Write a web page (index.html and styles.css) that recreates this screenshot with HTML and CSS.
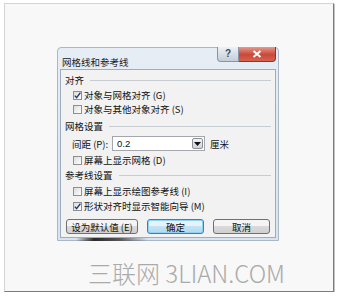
FILE: index.html
```html
<!DOCTYPE html>
<html lang="zh-CN">
<head>
    <meta charset="UTF-8">
    <title>网格线和参考线</title>
    <link rel="stylesheet" href="styles.css">
</head>
<body>
    <div class="photo">
        <div class="dialog">
            <div class="titlebar">
                <span class="title">网格线和参考线</span>
                <div class="caption-buttons">
                    <div class="cap-help">?</div>
                    <div class="cap-close">
                        <svg width="10" height="8" viewBox="0 0 10 8"><path d="M1.5 1 L8.5 7 M8.5 1 L1.5 7" stroke="#fff" stroke-width="2"/></svg>
                    </div>
                </div>
            </div>
            <div class="client">
                <div class="group-head gh-1"><span>对齐</span><i></i></div>
                <div class="check-row r-1">
                    <span class="box checked"><svg width="9" height="9" viewBox="0 0 9 9"><path d="M1.8 4.6 L3.6 6.6 L7.4 1.6" fill="none" stroke="#1c3a6b" stroke-width="1.4"/></svg></span>
                    <span>对象与网格对齐 (<u>G</u>)</span>
                </div>
                <div class="check-row r-2">
                    <span class="box"></span>
                    <span>对象与其他对象对齐 (<u>S</u>)</span>
                </div>

                <div class="group-head gh-2"><span>网格设置</span><i></i></div>
                <div class="spacing-row">
                    <span class="spacing-label">间距 (<u>P</u>):</span>
                    <div class="combo">
                        <span class="combo-value">0.2</span>
                        <span class="combo-arrow"><svg width="7" height="4" viewBox="0 0 7 4"><path d="M0 0 H7 L3.5 4 Z" fill="#111"/></svg></span>
                    </div>
                    <span class="unit">厘米</span>
                </div>
                <div class="check-row r-3">
                    <span class="box"></span>
                    <span>屏幕上显示网格 (<u>D</u>)</span>
                </div>

                <div class="group-head gh-3"><span>参考线设置</span><i></i></div>
                <div class="check-row r-4">
                    <span class="box"></span>
                    <span>屏幕上显示绘图参考线 (<u>I</u>)</span>
                </div>
                <div class="check-row r-5">
                    <span class="box checked"><svg width="9" height="9" viewBox="0 0 9 9"><path d="M1.8 4.6 L3.6 6.6 L7.4 1.6" fill="none" stroke="#1c3a6b" stroke-width="1.4"/></svg></span>
                    <span>形状对齐时显示智能向导 (<u>M</u>)</span>
                </div>

                <div class="button-row">
                    <button class="btn btn-default">设为默认值 (<u>E</u>)</button>
                    <button class="btn btn-ok">确定</button>
                    <button class="btn btn-cancel">取消</button>
                </div>
            </div>
            <div class="bottom-frame"><i></i></div>
        </div>
        <div class="watermark">三联网 3LIAN.COM</div>
    </div>
</body>
</html>
```

FILE: styles.css
```css
* {
    margin: 0;
    padding: 0;
    box-sizing: border-box;
}

body {
    background-color: #ffffff;
    font-family: "Noto Sans CJK SC", "Liberation Sans", sans-serif;
    padding: 3px 0 0 4px;
}

.photo {
    width: 330px;
    height: 289px;
    background-color: #f8f8f8;
    border: 1px solid #d4d4d4;
    border-right-color: #7c7c7c;
    border-bottom-color: #7c7c7c;
    box-shadow: 1px 1px 0 #c4c4c4;
    padding: 43px 0 0 52px;
}

/* dialog window */
.dialog {
    width: 222px;
    height: 194px;
    background: linear-gradient(#e6edf5, #d9e4f0);
    border: 1px solid #aab7c6;
    border-radius: 4px 4px 0 0;
    padding: 0 2px;
    display: flex;
    flex-direction: column;
}

.titlebar {
    height: 21px;
    display: flex;
    justify-content: space-between;
    align-items: flex-start;
}

.title {
    font-size: 9.5px;
    line-height: 11px;
    color: #1a1a1a;
    margin: 9px 0 0 2px;
}

.caption-buttons {
    display: flex;
    margin-top: -1px;
}

.cap-help {
    width: 22px;
    height: 15px;
    border: 1px solid #8894a4;
    border-top: none;
    border-radius: 0 0 0 4px;
    background: linear-gradient(#eef1f5, #c4ccd6);
    font-family: "Liberation Sans", sans-serif;
    font-size: 10px;
    font-weight: bold;
    color: #3d4a5c;
    text-align: center;
    line-height: 14px;
}

.cap-close {
    width: 37px;
    height: 15px;
    border: 1px solid #7b3a32;
    border-top: none;
    border-left: none;
    border-radius: 0 0 4px 0;
    background: linear-gradient(#e49a8d, #c9483a 55%, #d8634f);
    display: flex;
    align-items: center;
    justify-content: center;
}

.client {
    height: 169px;
    background-color: #f2f2f2;
    border: 1px solid #9eacbd;
    padding: 3px 0 0 0;
    display: flex;
    flex-direction: column;
    font-size: 9.5px;
    color: #111;
}

.client u {
    text-decoration: none;
}

.group-head {
    height: 14px;
    line-height: 14px;
    display: flex;
    align-items: center;
    padding: 0 4px 0 4px;
}

.group-head i {
    flex: 1;
    height: 1px;
    background-color: #c7ccd2;
    margin-left: 6px;
}

.gh-2 { margin-top: 3px; }
.gh-3 { margin-top: 1px; }

.check-row {
    height: 14px;
    display: flex;
    align-items: center;
    padding-left: 12px;
    line-height: 14px;
}

.r-1 { margin-top: 1px; }
.r-3 { margin-top: 2px; }
.r-4 { margin-top: 2px; }
.r-5 { margin-top: 1px; }

.box {
    width: 9px;
    height: 9px;
    border: 1px solid #8f8f8f;
    background: linear-gradient(135deg, #dcdcdc, #ffffff);
    margin-right: 2px;
    display: flex;
    align-items: center;
    justify-content: center;
}

.box svg {
    flex: none;
}

.spacing-row {
    height: 15px;
    margin-top: 3px;
    display: flex;
    align-items: center;
    padding-left: 11px;
}

.spacing-label {
    width: 40px;
}

.combo {
    width: 93px;
    height: 15px;
    border: 1px solid #a4a8ae;
    background-color: #ffffff;
    display: flex;
    align-items: center;
    justify-content: space-between;
    padding: 0 1px 0 4px;
    font-family: "Liberation Sans", sans-serif;
}

.combo-value {
    font-size: 9.5px;
}

.combo-arrow {
    width: 11px;
    height: 11px;
    border: 1px solid #8c9099;
    border-radius: 2px;
    background: linear-gradient(#f4f4f4, #cfd2d6);
    display: flex;
    align-items: center;
    justify-content: center;
}

.unit {
    margin-left: 5px;
}

.button-row {
    margin-top: 6px;
    display: flex;
    justify-content: space-between;
    padding: 0 5px;
}

.btn {
    height: 15px;
    font-family: "Noto Sans CJK SC", sans-serif;
    font-size: 9.5px;
    line-height: 12px;
    color: #111;
    border: 1px solid #707070;
    border-radius: 3px;
    background: linear-gradient(#f4f4f4 45%, #dadada 50%, #cfcfcf);
}

.btn-default { width: 72px; }

.btn-ok {
    width: 57px;
    border-color: #3c7fb1;
    background: linear-gradient(#e6f3fb 45%, #c6e3f5 50%, #b2d8ef);
    box-shadow: inset 0 0 0 1px #8fd2f4;
}

.btn-cancel { width: 57px; }

.bottom-frame {
    flex: 1;
    position: relative;
}

.bottom-frame i {
    position: absolute;
    left: 16px;
    top: 0;
    width: 72px;
    height: 3px;
    border-radius: 2px;
    background: linear-gradient(90deg, rgba(40,40,40,0), #2a2a2a 25%, #555 60%, rgba(40,40,40,0));
}

.watermark {
    margin: 18px 0 0 31px;
    font-family: "Noto Sans CJK SC", "Liberation Sans", sans-serif;
    font-weight: 300;
    font-size: 24px;
    line-height: 28px;
    color: #aaaaaa;
    letter-spacing: 0;
}
```
